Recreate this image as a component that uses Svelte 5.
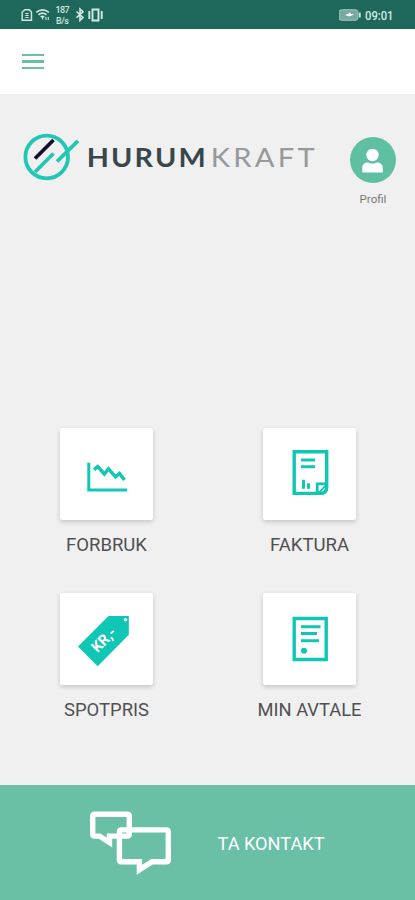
<script lang="ts">
	type Tile = {
		id: 'usage' | 'invoice' | 'price' | 'contract';
		label: string;
		width: number;
	};

	const tiles: Tile[] = [
		{ id: 'usage', label: 'FORBRUK', width: 81 },
		{ id: 'invoice', label: 'FAKTURA', width: 79 },
		{ id: 'price', label: 'SPOTPRIS', width: 85 },
		{ id: 'contract', label: 'MIN AVTALE', width: 104 }
	];

	let menuOpen = $state(false);
</script>

<div class="app">
	<div class="status">
		<svg class="status-left" width="90" height="28" viewBox="0 0 90 28" fill="none" stroke="#d3e8e2" stroke-width="1.4">
			<path d="M5 9.7h4.2l2.3 2.3v8.3H2.2V12z" />
			<path d="M5.3 13.5h3.4M5.3 15.5h3.4M5.3 17.5h3.4" stroke-width="1" />
			<path d="M16.3 12.3q6.2-5 12.6 0M18.5 14.7q4-3 8 0M20.7 17q1.8-1.4 3.6 0" stroke-width="1.7" />
			<path d="M22.6 17v2.5M26 17v3M28.3 17v3" stroke-width="1.1" />
			<text x="42.5" y="13" text-anchor="middle" textLength="14">187</text>
			<text x="42.5" y="24" text-anchor="middle" textLength="13">B/s</text>
			<path d="M56.5 11.5l6.5 6-3 2.8V9l3 2.7-6.5 6" stroke-width="1.6" />
			<path d="M72.5 9.5h6v11h-6zM69.3 11v8M81.7 11v8" stroke-width="1.9" />
		</svg>
		<div class="status-right">
			<svg width="24" height="28" viewBox="0 0 24 28">
				<rect x="0" y="9.7" width="19" height="10.6" rx="2.5" fill="#77aaa0" stroke="#9fc6bd" />
				<path d="M20.8 12.5v5" stroke="#d3e8e2" stroke-width="1.8" />
				<path d="M6 15l4-1.5 1-1 1 1.5h3l-3.5 2.2h-2z" fill="#fff" />
			</svg>
			<svg width="34" height="28" viewBox="0 0 34 28">
				<text class="time" x="2" y="19.5" textLength="28.5" lengthAdjust="spacingAndGlyphs">09:01</text>
			</svg>
		</div>
	</div>

	<div class="toolbar">
		<button class="menu" aria-label="Meny" aria-expanded={menuOpen} onclick={() => (menuOpen = !menuOpen)}>
			<span></span>
			<span></span>
			<span></span>
		</button>
	</div>

	<main>
		<div class="brand">
			<svg class="logo" width="300" height="56" viewBox="0 0 300 56">
				<g fill="none" stroke-width="3.8">
					<circle cx="26.7" cy="28" r="21.3" stroke="#1fc7b4" />
					<path d="M15 29.5L33.5 11" stroke="#14102f" />
					<path d="M15 43L33.5 24.5M37 32.5L58 11.8" stroke="#1fc7b4" />
				</g>
				<text class="hurum" x="66.8" y="37.7" textLength="121" lengthAdjust="spacingAndGlyphs">HURUM</text>
				<text class="kraft" x="190.8" y="37.7" textLength="107" lengthAdjust="spacingAndGlyphs">KRAFT</text>
			</svg>
			<button class="profile">
				<span class="avatar">
					<svg width="46" height="46" viewBox="0 0 46 46" fill="#fff">
						<circle cx="22.5" cy="18" r="6.2" />
						<path d="M12.3 35.5V31c0-3.5 2.2-5.5 5.7-5.5q4.5 2.3 9 0c3.5 0 5.8 2 5.8 5.5v4.5z" />
					</svg>
				</span>
				<span class="profile-name">Profil</span>
			</button>
		</div>

		<div class="tiles">
			{#each tiles as tile (tile.id)}
				<button class="tile">
					<span class="card">
						<svg width="93" height="92" viewBox="0 -0.7 93 92" fill="none" stroke="#10c6b4" stroke-width="3">
							{#if tile.id === 'usage'}
								<path d="M28.8 34v27.3H67" />
								<path d="M34 41l3.8-3 6.5 7.3 4.2-5.2 7 8 4-3.3 5 6.5" stroke-width="3.4" />
							{:else if tile.id === 'invoice'}
								<path d="M31.2 23h32.5v35.2q0 6.5-6.5 6.5H31.2z" stroke-width="3.4" />
								<path d="M54.2 65.5V55.2h9.5" stroke-width="2.8" />
								<path d="M38 31.3h14M38 38h14" />
								<path d="M40.5 51v9M45.5 54.5V60" stroke-width="3" />
								<path d="M55.5 64.5l7-7.5" stroke-width="1.8" />
							{:else if tile.id === 'price'}
								<path d="M48.5 22.3h20.3v18.8L37.7 72.5 18 52.8z" fill="#10c6b4" stroke="none" />
								<circle cx="65.5" cy="26" r="1.7" fill="#fff" stroke="none" />
								<text class="tag" x="37.5" y="59.5" transform="rotate(-45 37.5 59.5)" textLength="28" lengthAdjust="spacingAndGlyphs">KR,-</text>
							{:else}
								<path d="M31.2 24.8h32v41h-32z" stroke-width="3.4" />
								<path d="M38 33h19.5M38 39.8h16M38 47h18" />
								<circle cx="41" cy="57" r="3" fill="#10c6b4" stroke="none" />
							{/if}
						</svg>
					</span>
					<svg class="label" width="120" height="26" viewBox="0 0 120 26">
						<text x="59.5" y="19.3" text-anchor="middle" textLength={tile.width} lengthAdjust="spacingAndGlyphs">{tile.label}</text>
					</svg>
				</button>
			{/each}
		</div>
	</main>

	<button class="contact">
		<svg width="84" height="66" viewBox="0 0 84 66" fill="none" stroke="#fff" stroke-width="5.4">
			<path d="M5.7 4.2h32.6q2 0 2 2v17.9q0 2-2 2H20.5v6.5L10.5 26.1H5.7q-2 0-2-2V6.2q0-2 2-2z" />
			<path d="M32.4 19.9h44.9q2 0 2 2v27.9q0 2-2 2H63L50.4 59.8V51.8h-18q-2 0-2-2V21.9q0-2 2-2z" />
		</svg>
		<svg width="112" height="30" viewBox="0 0 112 30">
			<text class="contact-text" x="0.5" y="21.5" textLength="107" lengthAdjust="spacingAndGlyphs">TA KONTAKT</text>
		</svg>
	</button>
</div>

<style>
	:global(body) {
		margin: 0;
		background: #f0f0f0;
	}

	.app {
		height: 900px;
		display: flex;
		flex-direction: column;
		font-family: Roboto, sans-serif;
		background: #f0f0f0;
		overflow: hidden;
	}

	svg {
		display: block;
	}

	button {
		padding: 0;
		border: none;
		background: none;
		font-family: inherit;
		cursor: pointer;
	}

	.status {
		height: 29px;
		flex: none;
		display: flex;
		justify-content: space-between;
		padding: 0 18px 0 20px;
		background: #1d685b;
		box-sizing: border-box;
	}

	.status text {
		fill: #d3e8e2;
		stroke: none;
		font-size: 9px;
		font-weight: 500;
	}

	.status-right {
		display: flex;
	}

	.status .time {
		font-size: 12.5px;
	}

	.toolbar {
		height: 65px;
		flex: none;
		display: flex;
		align-items: center;
		padding-left: 22px;
		background: #fff;
	}

	.menu {
		width: 22px;
		display: flex;
		flex-direction: column;
		gap: 4px;
	}

	.menu span {
		width: 22px;
		height: 2.4px;
		background: #6abfa5;
	}

	main {
		flex: 1;
		display: flex;
		flex-direction: column;
		justify-content: space-between;
	}

	.brand {
		display: flex;
		align-items: flex-start;
		justify-content: space-between;
		padding: 35px 19px 0 20px;
	}

	.hurum {
		font-family: Lato, sans-serif;
		font-size: 27.5px;
		font-weight: 700;
		letter-spacing: 2px;
		fill: #37474b;
	}

	.kraft {
		font-family: Lato, sans-serif;
		font-size: 27.5px;
		font-weight: 400;
		letter-spacing: 3px;
		fill: #97999b;
	}

	.profile {
		display: flex;
		flex-direction: column;
		align-items: center;
		gap: 9px;
		margin-top: 8px;
	}

	.avatar {
		width: 46px;
		height: 46px;
		border-radius: 50%;
		background: #5fbfa2;
	}

	.profile-name {
		font-size: 11.5px;
		line-height: 14px;
		color: #777;
	}

	.tiles {
		display: grid;
		grid-template-columns: 120px 120px;
		column-gap: 83px;
		row-gap: 35px;
		padding: 0 0 62px 46.5px;
	}

	.tile {
		display: flex;
		flex-direction: column;
		align-items: center;
		gap: 12px;
	}

	.card {
		width: 93px;
		height: 92px;
		border-radius: 2px;
		background: #fff;
		box-shadow: 0 2px 5px rgba(0, 0, 0, 0.18);
	}

	.label text {
		font-size: 18.5px;
		fill: #505050;
	}

	.tag {
		font-size: 15px;
		font-weight: 700;
		fill: #fff;
		stroke: none;
	}

	.contact {
		height: 115px;
		flex: none;
		display: flex;
		align-items: center;
		gap: 44px;
		padding-left: 89px;
		background: #69c0a7;
	}

	.contact-text {
		font-size: 18.5px;
		fill: #fff;
	}
</style>
